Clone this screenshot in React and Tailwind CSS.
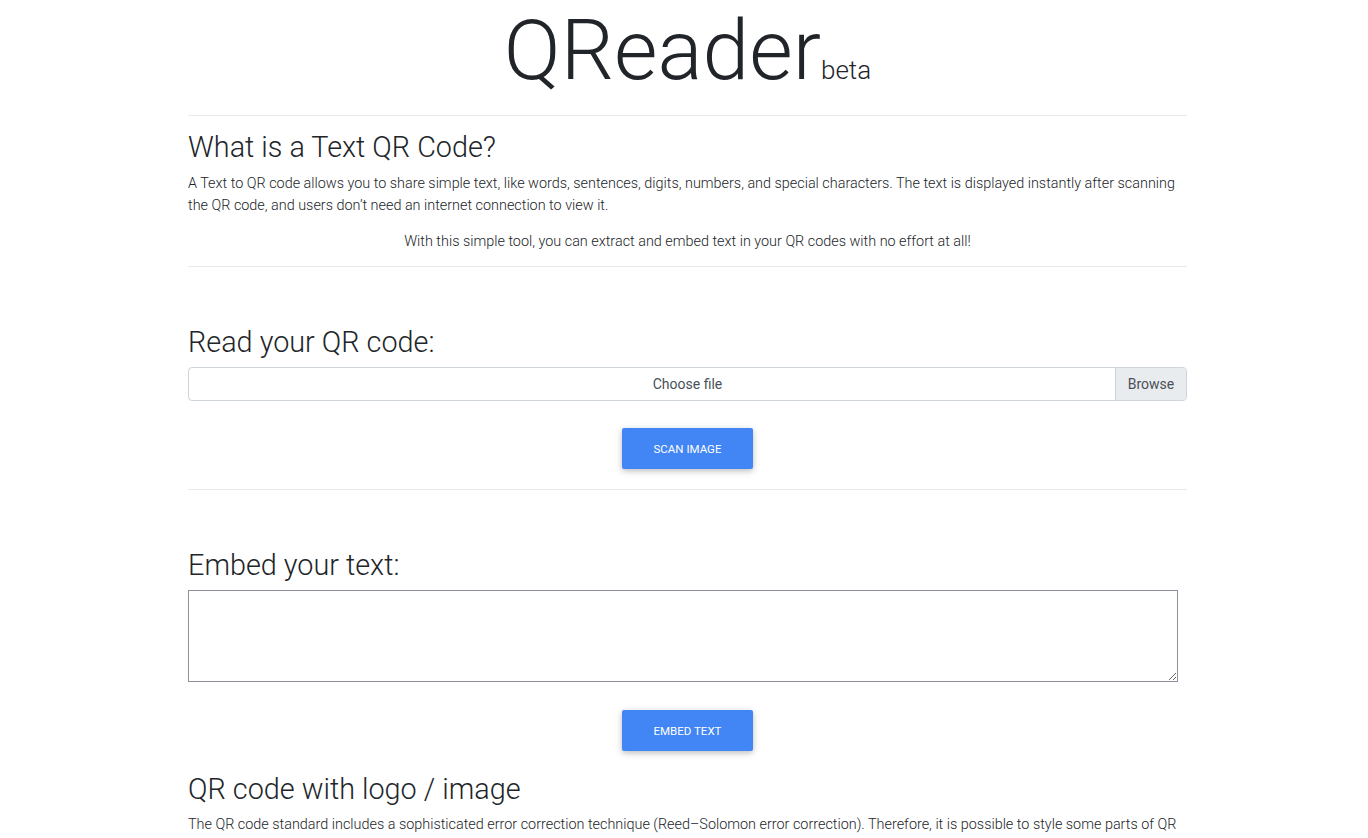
export default function App() {
  const font = { fontFamily: "Roboto, 'Noto Sans', sans-serif" };
  return (
    <div className="min-h-screen bg-white text-[#212529]" style={font}>
      <div className="ml-[188px] w-[999px]">
        <div className="flex h-[115px] items-start justify-center">
          <h1 className="mt-[5px] text-[84px] font-light leading-[1.1]">
            QReader<span className="text-[26px] font-light">beta</span>
          </h1>
        </div>
        <hr className="border-t border-[#e9e9e9]" />
        <div className="pt-[14px]">
          <h3 className="text-[28.8px] font-light leading-[1.2]">What is a Text QR Code?</h3>
          <p className="mt-[8px] text-[14.4px] font-light leading-[22px]">
            A Text to QR code allows you to share simple text, like words, sentences, digits, numbers, and special characters. The text is displayed instantly after scanning the QR code, and users don’t need an internet connection to view it.
          </p>
          <p className="mt-[14px] text-center text-[14.4px] font-light leading-[22px]">
            With this simple tool, you can extract and embed text in your QR codes with no effort at all!
          </p>
        </div>
        <hr className="mt-[13px] border-t border-[#e9e9e9]" />
        <div className="pt-[58px]">
          <h3 className="text-[28.8px] font-light leading-[1.2]">Read your QR code:</h3>
          <div className="mt-[8px] flex h-[34px] overflow-hidden rounded-[4px] border border-[#ced4da] text-[14px] text-[#495057]">
            <div className="flex flex-1 items-center justify-center pl-[71px]">Choose file</div>
            <div className="flex w-[71px] items-center justify-center border-l border-[#ced4da] bg-[#e9ecef]">Browse</div>
          </div>
          <div className="mt-[27px] flex justify-center">
            <button className="h-[41px] w-[131px] rounded-[2px] bg-[#4285f4] pt-[2px] text-[11.5px] uppercase text-white shadow-[0_2px_5px_0_rgba(0,0,0,0.16),0_2px_10px_0_rgba(0,0,0,0.12)]">
              Scan image
            </button>
          </div>
        </div>
        <hr className="mt-[20px] border-t border-[#e9e9e9]" />
        <div className="pt-[58px]">
          <h3 className="text-[28.8px] font-light leading-[1.2]">Embed your text:</h3>
          <textarea className="mt-[7px] block h-[92px] w-[990px] border border-[#8f8f9d] bg-white" />
          <div className="mt-[28px] flex justify-center">
            <button className="h-[41px] w-[131px] rounded-[2px] bg-[#4285f4] pt-[2px] text-[11.5px] uppercase text-white shadow-[0_2px_5px_0_rgba(0,0,0,0.16),0_2px_10px_0_rgba(0,0,0,0.12)]">
              Embed text
            </button>
          </div>
        </div>
        <div className="pt-[21px]">
          <h3 className="text-[28.8px] font-light leading-[1.2]">QR code with logo / image</h3>
          <p className="mt-[8px] text-[14.4px] font-light leading-[22px]">
            The QR code standard includes a sophisticated error correction technique (Reed–Solomon error correction). Therefore, it is possible to style some parts of QR codes without breaking them. You can put a logo or an image in the middle of the QR code and it will still be scannable.
          </p>
        </div>
      </div>
    </div>
  );
}
